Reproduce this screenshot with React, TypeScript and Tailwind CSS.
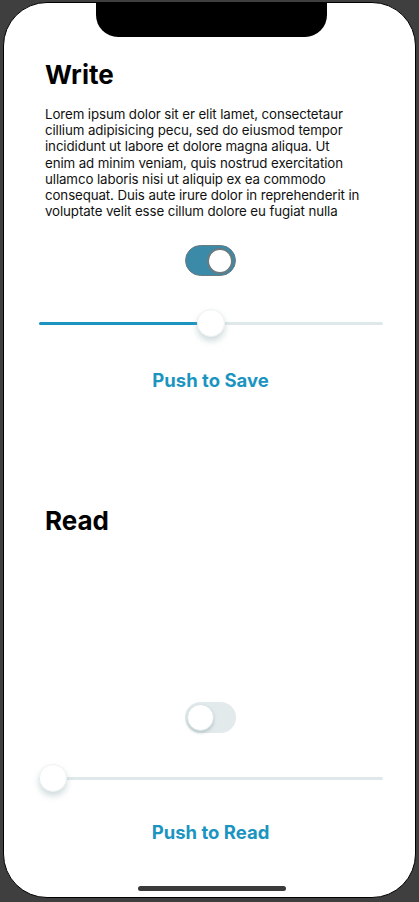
import React from "react";

const lines = [
  "Lorem ipsum dolor sit er elit lamet, consectetaur",
  "cillium adipisicing pecu, sed do eiusmod tempor",
  "incididunt ut labore et dolore magna aliqua. Ut",
  "enim ad minim veniam, quis nostrud exercitation",
  "ullamco laboris nisi ut aliquip ex ea commodo",
  "consequat. Duis aute irure dolor in reprehenderit in",
  "voluptate velit esse cillum dolore eu fugiat nulla",
];

function Slider({ pct }: { pct: number }) {
  const thumbLeft = `calc(${pct / 100} * (100% - 28px))`;
  return (
    <div className="relative ml-[35px] mr-[32px] h-[30px] flex items-center">
      <div className="w-full h-[3px] bg-[#dfe8ea] rounded-full" />
      <div
        className="absolute left-0 h-[3px] bg-[#1b95c0] rounded-full"
        style={{ width: `calc(${pct / 100} * (100% - 28px) + 14px)` }}
      />
      <div
        className="absolute top-[1px] w-[28px] h-[28px] rounded-full bg-white border border-[#eef2f3] shadow-[0_4px_6px_rgba(150,175,180,0.45)]"
        style={{ left: thumbLeft }}
      />
    </div>
  );
}

function Toggle({ on }: { on: boolean }) {
  return (
    <div className="flex justify-center pl-[2px]">
      <div
        className={
          on
            ? "w-[51px] h-[31px] rounded-full bg-[#3a8aa8] border border-[#6b7b80] flex items-center justify-end p-[2px]"
            : "w-[51px] h-[31px] rounded-full bg-[#e2eaec] flex items-center justify-start p-[2px]"
        }
      >
        <div
          className={
            on
              ? "w-[26px] h-[26px] rounded-full bg-white border-2 border-[#6b7b80]"
              : "w-[27px] h-[27px] rounded-full bg-white border border-[#d9e3e5] shadow-[0_2px_3px_rgba(150,170,175,0.5)]"
          }
        />
      </div>
    </div>
  );
}

export default function App() {
  return (
    <div
      className="w-[419px] h-[902px] bg-[#3f3f3f] pt-[2px] px-[3px]"
      style={{ fontFamily: "Inter, 'Noto Sans', sans-serif" }}
    >
      <div className="relative w-[413px] h-[896px] bg-white rounded-[44px] overflow-hidden border border-black flex flex-col">
        <div className="absolute left-[92px] top-[-1px] w-[231px] h-[35px] bg-black rounded-b-[22px]" />
        <div className="absolute left-[134px] bottom-[6px] w-[148px] h-[5px] rounded-full bg-[#3a3a3a]" />

        <h1 className="mt-[56px] ml-[41px] text-[26px] leading-[32px] font-bold text-black">Write</h1>
        <div className="mt-[15px] ml-[41px] text-[13.3px] leading-[16.2px] text-[#111] tracking-[-0.1px]">
          {lines.map((l) => (
            <div key={l} className="whitespace-nowrap">{l}</div>
          ))}
        </div>
        <div className="mt-[26px]">
          <Toggle on />
        </div>
        <div className="mt-[32px]">
          <Slider pct={50} />
        </div>
        <div className="mt-[31px] text-center text-[18.5px] leading-[22px] font-bold text-[#1b95c0] pl-[2px]">Push to Save</div>

        <h1 className="mt-[114px] ml-[41px] text-[26px] leading-[32px] font-bold text-black">Read</h1>
        <div className="mt-[165px]">
          <Toggle on={false} />
        </div>
        <div className="mt-[30px]">
          <Slider pct={0} />
        </div>
        <div className="mt-[28px] text-center text-[18.5px] leading-[22px] font-bold text-[#1b95c0] pl-[2px]">Push to Read</div>
      </div>
    </div>
  );
}
